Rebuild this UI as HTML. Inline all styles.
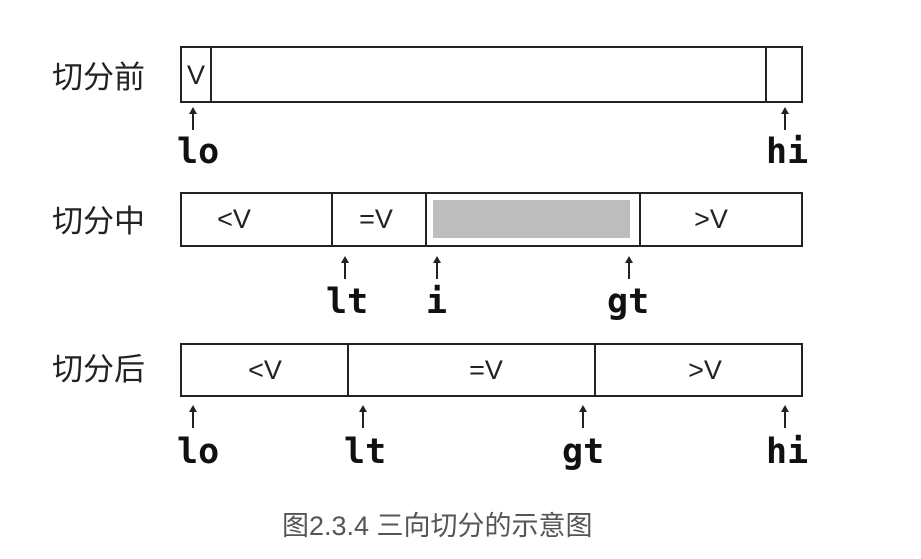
<!DOCTYPE html>
<html><head><meta charset="utf-8"><style>
body{margin:0;width:921px;height:559px;background:#fff;position:relative;overflow:hidden;font-family:"Liberation Sans","Noto Sans CJK SC",sans-serif}
.a{position:absolute}
.box{position:absolute;border:2px solid #222;box-sizing:border-box}
.d{position:absolute;width:2px;background:#222}
.cn{position:absolute;font-size:31px;color:#222;font-family:"Noto Sans CJK SC",sans-serif;line-height:1}
.t{position:absolute;font-size:27px;color:#222;line-height:1;transform:translateX(-50%)}
.m{position:absolute;font-family:"DejaVu Sans Mono","Liberation Mono",monospace;font-weight:bold;font-size:35px;color:#111;line-height:1}
.ar{position:absolute;width:2px;background:#222}
.ar:before{content:"";position:absolute;left:-3px;top:-5px;border-left:4px solid transparent;border-right:4px solid transparent;border-bottom:7px solid #222}
</style></head><body>
<div class="cn" style="left:52px;top:59px">切分前</div>
<div class="cn" style="left:52px;top:203px">切分中</div>
<div class="cn" style="left:52px;top:351px">切分后</div>

<div class="box" style="left:180px;top:46px;width:623px;height:57px"></div>
<div class="d" style="left:210px;top:46px;height:57px"></div>
<div class="d" style="left:765px;top:46px;height:57px"></div>
<div class="t" style="left:196px;top:62px">V</div>

<div class="box" style="left:180px;top:192px;width:623px;height:55px"></div>
<div class="d" style="left:331px;top:192px;height:55px"></div>
<div class="d" style="left:425px;top:192px;height:55px"></div>
<div class="d" style="left:639px;top:192px;height:55px"></div>
<div class="a" style="left:433px;top:200px;width:197px;height:38px;background:#bdbdbd"></div>
<div class="t" style="left:234px;top:206px">&lt;V</div>
<div class="t" style="left:376px;top:206px">=V</div>
<div class="t" style="left:711px;top:206px">&gt;V</div>

<div class="box" style="left:180px;top:343px;width:623px;height:54px"></div>
<div class="d" style="left:347px;top:343px;height:54px"></div>
<div class="d" style="left:594px;top:343px;height:54px"></div>
<div class="t" style="left:265px;top:357px">&lt;V</div>
<div class="t" style="left:486px;top:357px">=V</div>
<div class="t" style="left:705px;top:357px">&gt;V</div>

<div class="ar" style="left:192px;top:112px;height:18px"></div>
<div class="ar" style="left:784px;top:112px;height:18px"></div>
<div class="m" style="left:177px;top:135px">lo</div>
<div class="m" style="left:766px;top:135px">hi</div>

<div class="ar" style="left:344px;top:261px;height:18px"></div>
<div class="ar" style="left:436px;top:261px;height:18px"></div>
<div class="ar" style="left:628px;top:261px;height:18px"></div>
<div class="m" style="left:326px;top:285px">lt</div>
<div class="m" style="left:426px;top:285px">i</div>
<div class="m" style="left:607px;top:285px">gt</div>

<div class="ar" style="left:192px;top:410px;height:18px"></div>
<div class="ar" style="left:362px;top:410px;height:18px"></div>
<div class="ar" style="left:582px;top:410px;height:18px"></div>
<div class="ar" style="left:784px;top:410px;height:18px"></div>
<div class="m" style="left:177px;top:435px">lo</div>
<div class="m" style="left:344px;top:435px">lt</div>
<div class="m" style="left:562px;top:435px">gt</div>
<div class="m" style="left:766px;top:435px">hi</div>

<div class="a" style="left:282px;top:513px;font-size:27px;color:#555;line-height:1;white-space:nowrap">图2.3.4 三向切分的示意图</div>
</body></html>
